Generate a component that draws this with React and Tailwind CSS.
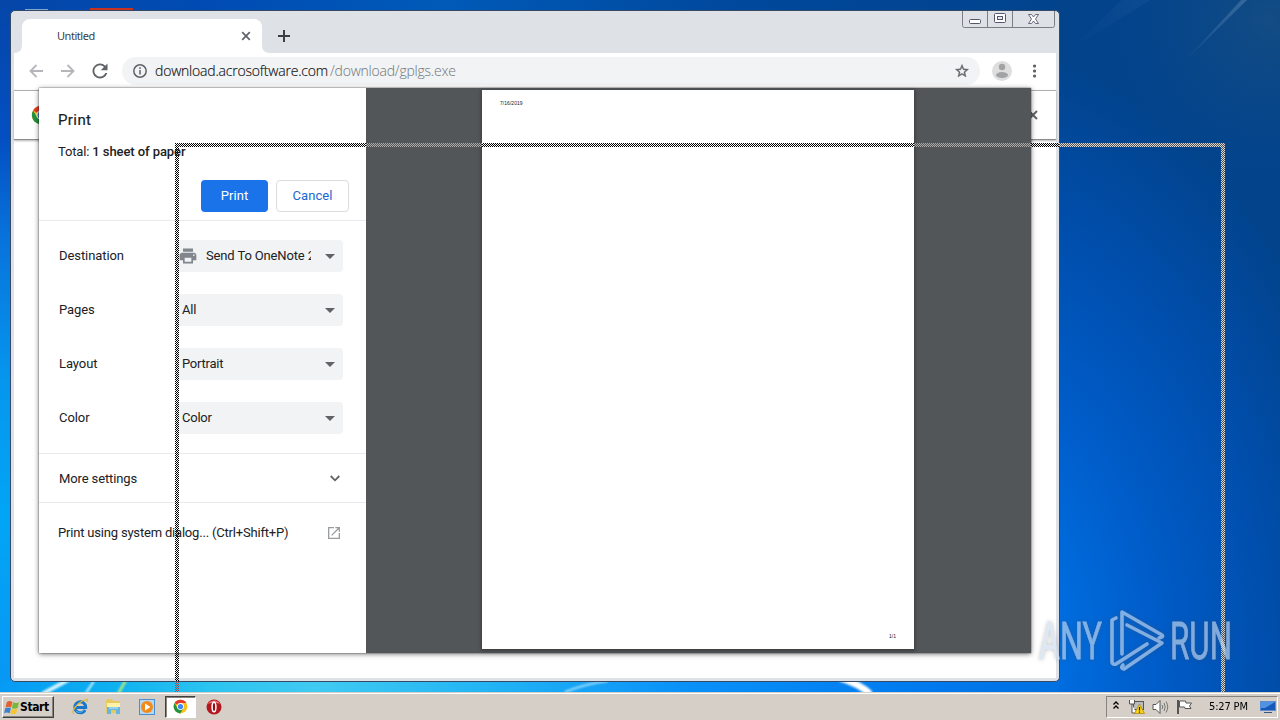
import React from "react";

function Wallpaper() {
  return (
    <svg className="absolute inset-0" width="1280" height="692" viewBox="0 0 1280 692">
      <defs>
        <linearGradient id="top" x1="0" x2="1" y1="0" y2="0">
          <stop offset="0" stopColor="#0546a8" />
          <stop offset=".2" stopColor="#004cb4" />
          <stop offset=".42" stopColor="#005ab8" />
          <stop offset=".7" stopColor="#00489c" />
          <stop offset="1" stopColor="#02438c" />
        </linearGradient>
        <linearGradient id="left" x1="0" x2="0" y1="0" y2="1">
          <stop offset="0" stopColor="#0546a8" />
          <stop offset=".2" stopColor="#034fc2" />
          <stop offset=".34" stopColor="#0872da" />
          <stop offset=".55" stopColor="#0596ee" />
          <stop offset=".75" stopColor="#02a5f5" />
          <stop offset="1" stopColor="#0896f4" />
        </linearGradient>
        <radialGradient id="right" gradientUnits="userSpaceOnUse" cx="0" cy="0" r="1" gradientTransform="translate(960 650) scale(440 640)">
          <stop offset="0" stopColor="#0086ff" />
          <stop offset=".24" stopColor="#006cde" />
          <stop offset=".45" stopColor="#005cc8" />
          <stop offset=".7" stopColor="#004eac" />
          <stop offset=".95" stopColor="#02438c" />
          <stop offset="1" stopColor="#02438c" />
        </radialGradient>
        <radialGradient id="corner" gradientUnits="userSpaceOnUse" cx="1270" cy="20" r="170">
          <stop offset="0" stopColor="#1c5080" stopOpacity=".7" />
          <stop offset="1" stopColor="#0a4886" stopOpacity="0" />
        </radialGradient>
        <linearGradient id="bottom" x1="0" x2="1" y1="0" y2="0">
          <stop offset="0" stopColor="#069af5" />
          <stop offset=".1" stopColor="#0cb0f0" />
          <stop offset=".2" stopColor="#2cc4f0" />
          <stop offset=".3" stopColor="#40caf2" />
          <stop offset=".46" stopColor="#22b4f4" />
          <stop offset=".64" stopColor="#0a92f8" />
          <stop offset=".85" stopColor="#007cf0" />
          <stop offset="1" stopColor="#0070e2" />
        </linearGradient>
        <linearGradient id="ray" x1="0" x2="1" y1="1" y2="0">
          <stop offset="0" stopColor="#fff" stopOpacity="0" />
          <stop offset="1" stopColor="#bde" stopOpacity=".22" />
        </linearGradient>
        <filter id="soft"><feGaussianBlur stdDeviation="1" /></filter>
      </defs>
      <rect width="1280" height="692" fill="url(#right)" />
      <rect x="1050" width="230" height="220" fill="url(#corner)" />
      <rect width="1060" height="12" fill="url(#top)" />
      <rect width="12" height="692" fill="url(#left)" />
      <rect y="681" width="1059" height="11" fill="url(#bottom)" />
      <path d="M1180 66L1250 -3H1244Z" fill="url(#ray)" />
      <path d="M1070 50L1155 -3H1125Z" fill="url(#ray)" opacity=".2" />
      <g filter="url(#soft)" stroke="#d8f6ff" fill="none">
        <path d="M42 694L68 680" strokeWidth="4" />
        <path d="M86 693L94 681" strokeWidth="2" />
        <path d="M118 694L126 680" stroke="#c5ef70" strokeWidth="2.5" />
        <path d="M565 692Q584 684 608 681" strokeWidth="2" opacity=".7" />
        <path d="M840 678Q860 684 870 694" stroke="#fff" strokeWidth="7" />
      </g>
      <rect x="90" y="8" width="43" height="3" fill="#c8321e" />
      <rect x="25" y="9" width="23" height="1" fill="#7fa5d0" />
    </svg>
  );
}

function ChromeIcon({ size }) {
  return (
    <svg width={size} height={size} viewBox="0 0 24 24" className="shrink-0">
      <circle cx="12" cy="12" r="11" fill="#fbc116" />
      <path d="M12 12L2.5 6.5A11 11 0 0 1 21.5 6.5H12Z" fill="#e33b2e" />
      <path d="M2.5 6.5A11 11 0 0 0 11.5 23L16.8 14.8L12 17L7.2 14.8Z" fill="#229342" />
      <circle cx="12" cy="12" r="5.5" fill="#fff" />
      <circle cx="12" cy="12" r="4.2" fill="#4285f4" />
    </svg>
  );
}

function TabStrip() {
  return (
    <div className="flex h-[42px] items-start">
      <div className="relative mt-2 ml-[8px] flex h-[34px] w-[240px] items-center rounded-t-[8px] bg-white pl-[35px] pr-[10px]">
        <svg className="absolute bottom-0 -left-2" width="8" height="8"><path d="M8 0V8H0Q8 8 8 0" fill="#fff" /></svg>
        <svg className="absolute bottom-0 -right-2" width="8" height="8"><path d="M0 0V8H8Q0 8 0 0" fill="#fff" /></svg>
        <span className="font-['Noto_Sans','Open_Sans',sans-serif] text-[11px] tracking-[-0.45px] text-[#3c4043]">Untitled</span>
        <svg className="ml-auto" width="12" height="12" viewBox="0 0 12 12" stroke="#5f6368" strokeWidth="1.7"><path d="M2.2 2.2L9.8 9.8M9.8 2.2L2.2 9.8" /></svg>
      </div>
      <svg className="mt-[19px] ml-[16px]" width="12" height="12" stroke="#3c4043" strokeWidth="2"><path d="M6 0V12M0 6H12" /></svg>
      <svg className="mr-[1px] ml-auto" width="93" height="17" fill="none">
        <path d="M.5 0V14.5Q.5 16.5 2.5 16.5H90.5Q92.5 16.5 92.5 14.5V0M25.5 0V16M50.5 0V16" stroke="#7b7e86" />
        <rect x="7.5" y="8.500" width="11" height="4" rx="1" fill="#fff" stroke="#55586a" />
        <rect x="32.500" y="2.500" width="11" height="9" rx="1" fill="#fff" stroke="#55586a" />
        <rect x="35.500" y="5.500" width="5" height="3" fill="#e8eaef" stroke="#55586a" />
        <path d="M66.500 3.500H69.500L71.500 6L73.500 3.500H76.500L73.500 8L76.500 12.500H73.500L71.500 10L69.500 12.500H66.500L69.500 8Z" fill="#fff" stroke="#66697a" />
      </svg>
    </div>
  );
}

function Toolbar() {
  return (
    <div className="flex h-[37px] items-center bg-white pb-[2px]">
      <svg className="ml-[15px]" width="14" height="14" fill="none" stroke="#b4b6b9" strokeWidth="1.8"><path d="M14 7H1.500M7.500 1L1.500 7L7.500 13" /></svg>
      <svg className="ml-[18px]" width="14" height="14" fill="none" stroke="#b4b6b9" strokeWidth="1.8"><path d="M0 7H12.500M6.500 1L12.500 7L6.500 13" /></svg>
      <svg className="ml-[16px]" width="18" height="18" viewBox="0 0 24 24" fill="#5f6368"><path d="M19.100 4.900A10 10 0 1 0 21.700 14.500H19A7.500 7.500 0 1 1 17.300 6.700L13 11H22V2Z" /></svg>
      <div className="ml-[13px] flex h-[28px] w-[858px] items-center rounded-full bg-[#f1f3f4] pr-[10px] pl-[10px] font-['Open_Sans','Noto_Sans',sans-serif] text-[14px] font-light">
        <svg width="16" height="16" viewBox="0 0 16 16"><circle cx="8" cy="8" r="6.200" fill="none" stroke="#5f6368" strokeWidth="1.500" /><path d="M8 7V11.500M8 4.300V5.900" stroke="#5f6368" strokeWidth="1.500" /></svg>
        <span className="ml-[7px] inline-block w-[175px] whitespace-nowrap tracking-[-0.2px] text-[#101114] [-webkit-text-stroke:0.15px]">download.acrosoftware.com</span>
        <span className="whitespace-nowrap tracking-[-0.22px] text-[#6f7377]">/download/gplgs.exe</span>
        <svg className="ml-auto" width="16" height="16" viewBox="0 0 24 24" fill="#5f6368"><path d="M22 9.240l-7.190-.62L12 2 9.190 8.630 2 9.240l5.460 4.730L5.820 21 12 17.270 18.180 21l-1.630-7.030L22 9.240zM12 15.400l-3.760 2.270 1-4.280-3.320-2.880 4.380-.38L12 6.100l1.710 4.040 4.380.38-3.320 2.880 1 4.280L12 15.400z" stroke="#5f6368" strokeWidth=".5" /></svg>
      </div>
      <svg className="ml-[12px]" width="20" height="20"><circle cx="10" cy="10" r="10" fill="#dedede" /><circle cx="10" cy="6" r="3.200" fill="#a2a3a5" /><ellipse cx="10" cy="14" rx="6" ry="3" fill="#a2a3a5" /></svg>
      <svg className="ml-[20px]" width="4" height="14" fill="#5f6368"><circle cx="2.500" cy="2" r="1.600" /><circle cx="2.500" cy="7" r="1.600" /><circle cx="2.500" cy="12" r="1.600" /></svg>
    </div>
  );
}

function SettingRow({ label, value, printer }) {
  return (
    <div className="flex h-8 items-center">
      <span className="w-[116px] text-[13px] tracking-[-0.08px]">{label}</span>
      <div className="flex h-8 w-[168px] items-center rounded-[4px] bg-[#f1f3f4] pr-2 pl-[7px]">
        {printer && (
          <svg className="-ml-[4px] mr-[8px] shrink-0" width="20" height="20" viewBox="0 0 24 24" fill="#80868b"><path d="M19 8H5c-1.660 0-3 1.340-3 3v6h4v4h12v-4h4v-6c0-1.660-1.340-3-3-3zm-3 11H8v-5h8v5zm3-7c-.55 0-1-.45-1-1s.45-1 1-1 1 .45 1 1-.45 1-1 1zm-1-9H6v4h12V3z" /></svg>
        )}
        <span className={printer ? "w-[105px] shrink-0 overflow-hidden whitespace-nowrap text-[13px] tracking-[-0.14px]" : "text-[13px] tracking-[-0.25px]"}>{value}</span>
        <svg className="ml-auto shrink-0" width="10" height="5"><path d="M0 0H10L5 5Z" fill="#5f6368" /></svg>
      </div>
    </div>
  );
}

function PrintPanel() {
  return (
    <div className="flex w-[327px] flex-col bg-white text-[#202124]">
      <div className="flex h-[133px] flex-col border-b border-[#e8eaed] pl-[19px]">
        <h1 className="mt-[21px] text-[15px] leading-[22px] tracking-[0.4px] [-webkit-text-stroke:0.2px]">Print</h1>
        <p className="mt-[11px] text-[13px] leading-[20px] tracking-[-0.15px] whitespace-nowrap">Total: <b className="font-medium tracking-[-0.08px]">1 sheet of paper</b></p>
        <div className="mt-[18px] flex justify-end gap-2 pr-[17px] text-[13px] tracking-[0.05px]">
          <button className="h-8 w-[67px] rounded-[4px] bg-[#1a73e8] text-white">Print</button>
          <button className="h-8 w-[73px] rounded-[4px] border border-[#dadce0] text-[#1967d2]">Cancel</button>
        </div>
      </div>
      <div className="flex h-[233px] flex-col gap-[22px] border-b border-[#e8eaed] pt-[19px] pl-[20px]">
        <SettingRow label="Destination" value="Send To OneNote 2010" printer />
        <SettingRow label="Pages" value="All" />
        <SettingRow label="Layout" value="Portrait" />
        <SettingRow label="Color" value="Color" />
      </div>
      <div className="flex h-[49px] items-center justify-between border-b border-[#e8eaed] pt-px pr-[26px] pl-[20px] text-[13px] tracking-[-0.12px]">
        More settings
        <svg width="10" height="7" fill="none" stroke="#5f6368" strokeWidth="1.8"><path d="M.7 1L5 5.300L9.300 1" /></svg>
      </div>
      <div className="flex h-[60px] items-center justify-between pr-[24px] pl-[19px] text-[13px]">
        <span className="tracking-[-0.19px]">Print using system dialog... (Ctrl+Shift+P)</span>
        <svg width="16" height="16" viewBox="0 0 24 24" fill="#9a9da0"><path d="M19 19H5V5h7V3H3v18h18v-9h-2v7zM14 3v2h3.590l-9.830 9.830 1.410 1.410L19 6.410V10h2V3h-7z" /></svg>
      </div>
    </div>
  );
}

function PrintDialog() {
  return (
    <div className="absolute top-[77px] left-[28px] flex h-[565px] w-[992px] font-['Roboto',sans-serif] shadow-[0_1px_5px_rgba(0,0,0,0.55),0_0_1px_rgba(0,0,0,0.8)]">
      <PrintPanel />
      <div className="flex flex-1 bg-[#525659] pt-[2px] pl-[116px]">
        <div className="flex h-[559px] w-[432px] flex-col justify-between bg-white pt-[10px] pr-[18px] pb-[9px] pl-[18px] font-['Liberation_Sans',sans-serif] text-[5px] leading-[7px] text-[#222] shadow-[0_1px_3px_1px_#3c3d3e]">
          <span className="tracking-[0.05px]">7/16/2019</span>
          <span className="text-right">1/1</span>
        </div>
      </div>
    </div>
  );
}

function BrowserWindow() {
  return (
    <div className="absolute top-[10px] left-[10px] h-[672px] w-[1050px] rounded-[5px] border border-[#344a66] bg-[#dee1e6] px-[3px] pb-[3px]">
      <TabStrip />
      <Toolbar />
      <div className="relative flex h-[50px] items-center justify-between border-t border-b border-t-[#b0b0b0] border-b-[#8c8c8c] bg-white pr-[18px] pl-[17px] shadow-[0_1px_2px_rgba(0,0,0,.3)]">
        <ChromeIcon size={20} />
        <svg width="10" height="10" stroke="#5f6368" strokeWidth="2"><path d="M1 1L9 9M9 1L1 9" /></svg>
      </div>
      <div className="h-[538px] bg-white" />
      <PrintDialog />
    </div>
  );
}

function Dither({ id, color, base }) {
  return (
    <pattern id={id} width="2" height="2" patternUnits="userSpaceOnUse">
      {base && <rect width="2" height="2" fill={base} />}
      <rect width="1" height="1" fill={color} />
      <rect x="1" y="1" width="1" height="1" fill={color} />
    </pattern>
  );
}

function DragOutline() {
  return (
    <svg className="absolute top-[143px] left-[175px]" width="1050" height="549" shapeRendering="crispEdges">
      <defs>
        <Dither id="onWhite" color="#000" />
        <Dither id="onGray" color="#ada9a6" />
        <Dither id="onBlue" color="#dcd6cc" base="#4a4f58" />
        <Dither id="onCyan" color="#9c4c50" />
      </defs>
      <g fill="url(#onWhite)">
        <rect width="191" height="4" />
        <rect x="307" width="432" height="4" />
        <rect x="856" width="28" height="4" />
        <rect y="4" width="4" height="534" />
      </g>
      <g fill="url(#onGray)">
        <rect x="191" width="116" height="4" />
        <rect x="739" width="117" height="4" />
      </g>
      <g fill="url(#onBlue)">
        <rect x="884" width="166" height="4" />
        <rect x="1046" y="4" width="4" height="545" />
      </g>
      <rect y="538" width="4" height="11" fill="url(#onCyan)" />
    </svg>
  );
}

function Watermark() {
  return (
    <svg className="absolute top-[600px] left-[1030px] drop-shadow-[0_0_2px_rgba(80,80,80,0.55)]" width="250" height="80" fill="#ccdcee" opacity=".64">
      <g fontFamily="'Liberation Sans Narrow','Roboto',sans-serif" fontSize="51" stroke="#ccdcee" strokeWidth=".8">
        <text x="9" y="59" textLength="63" lengthAdjust="spacingAndGlyphs">ANY</text>
        <text x="140" y="59" textLength="62" lengthAdjust="spacingAndGlyphs">RUN</text>
      </g>
      <g fill="none" stroke="#ccdcee" strokeWidth="3.6" strokeLinecap="round" strokeLinejoin="round">
        <path d="M86 18L82 20V62Q82 65 86 64L117 44" />
        <path d="M92 54V12L132 35Q134 37 129 38" />
        <path d="M97 25L132 43L94 69Q90 68 93 65" />
      </g>
    </svg>
  );
}

function Taskbar() {
  return (
    <div className="relative flex h-7 items-center border-t border-[#d4d0c8] bg-[#d5cfc7] shadow-[inset_0_1px_0_#fff]">
      <button className="mt-px ml-[2px] flex h-[22px] w-[52px] items-center border border-t-white border-r-[#404040] border-b-[#404040] border-l-white bg-[#d5cfc7] pl-[1px] font-['DejaVu_Sans_Condensed','DejaVu_Sans',sans-serif] text-[12px] font-bold tracking-[-0.4px] text-black shadow-[inset_-1px_-1px_0_#87837d]">
        <svg width="16" height="15" viewBox="0 0 17 16" className="shrink-0">
          <path d="M3 2Q6 0 9 2L7.500 8Q4.500 6.500 1.500 8Z" fill="#e5602c" /><path d="M9.800 2.500Q13 4 16 2.500L14.500 8.500Q11.500 10 8.300 8.400Z" fill="#79b83b" />
          <path d="M1.300 8.800Q4.300 7.300 7.300 8.800L6 14Q3 12.500 0 14Z" fill="#3d82cc" /><path d="M8 9.300Q11 11 14.200 9.400L12.800 14.500Q10 16 6.700 14.400Z" fill="#f6c52e" />
        </svg>
        Start
      </button>
      <div className="ml-[17px] flex h-[22px] items-center">
        <svg width="18" height="18" viewBox="0 0 18 18" fill="none"><path d="M14 12A5.500 5.500 0 1 1 14.700 9.500H5" stroke="#1976c8" strokeWidth="3" /><path d="M13 11.500A5 5 0 0 1 5 13" stroke="#5cb8ee" /><path d="M3 16C-1 14 7 4 14 2Q18 0 16 4" stroke="#e2b92f" strokeWidth="1.300" /></svg>
        <svg className="ml-[16px]" width="17" height="17" viewBox="0 0 17 17"><path d="M1 3L2 1H7L8 3H15V15H1Z" fill="#e7c95f" /><path d="M2 5H15V9H2Z" fill="#fff1a8" /><path d="M2 9H15V16H11V12H6V16H2Z" fill="#66b5dc" /><path d="M4 10H13" stroke="#c2edff" /></svg>
        <svg className="ml-[17px]" width="16" height="16" viewBox="0 0 16 16"><rect x=".5" y=".5" width="15" height="15" fill="#b5d7f0" stroke="#4b8fd0" /><circle cx="8" cy="8" r="6" fill="#f28a1a" /><path d="M6 4.500L11.500 8L6 11.500Z" fill="#fff" /></svg>
      </div>
      <div className="ml-[10px] flex h-[22px] w-[31px] items-center justify-center border border-t-[#404040] border-r-white border-b-white border-l-[#404040] bg-white shadow-[inset_1px_1px_0_#87837d]"><ChromeIcon size={15} /></div>
      <svg className="ml-[10px]" width="16" height="16" viewBox="0 0 16 16"><circle cx="8" cy="8" r="7.500" fill="#b31720" /><path d="M2 5A7 7 0 0 1 14 5Q8 2 2 5" fill="#e77" /><ellipse cx="8" cy="8" rx="1.900" ry="4.800" fill="#8e0f16" stroke="#fff" strokeWidth="1.500" /></svg>
      <div className="mt-px mr-[2px] ml-auto flex h-[22px] w-[172px] items-center border border-t-[#87837d] border-r-white border-b-white border-l-[#87837d] pl-[6px]">
        <svg width="6" height="9" className="-mt-[3px]" fill="none" stroke="#000" strokeWidth="1.300"><path d="M.5 3.500L3 1L5.500 3.500M.5 7.500L3 5L5.500 7.500" /></svg>
        <svg className="ml-[9px]" width="17" height="16" viewBox="0 0 17 16"><rect x="5.500" y="2.500" width="10" height="8" fill="#b9bdc0" stroke="#555" /><path d="M1.500 1V5H6.500V1M4 5V14H8" fill="#fff" stroke="#555" /><path d="M11.500 5L16.500 14.500H6.500Z" fill="#f9d21a" stroke="#a98300" strokeWidth=".7" /><path d="M11.500 8V11.500M11.500 12.500V13.700" stroke="#222" strokeWidth="1.200" /></svg>
        <svg className="ml-[7px]" width="17" height="16" viewBox="0 0 17 16" fill="none" stroke="#777"><path d="M1 5.500H4L8 1.500V14.500L4 10.500H1Z" fill="#fff" stroke="#555" /><path d="M10 6Q11.500 8 10 10M12 4Q14.500 8 12 12M14 2.500Q17.500 8 14 13.500" /></svg>
        <svg className="ml-[7px]" width="17" height="16" viewBox="0 0 17 16"><path d="M2 1V15" stroke="#555" strokeWidth="2" /><path d="M3.500 2H9.500L10 4H15.500L13.500 7L15 9.500H9L8.500 8H3.500Z" fill="#fff" stroke="#555" /></svg>
        <span className="ml-[16px] w-[41px] font-['DejaVu_Sans_Condensed','DejaVu_Sans',sans-serif] text-[11px] tracking-[-0.15px] whitespace-nowrap text-black">5:27 PM</span>
        <svg className="ml-[10px]" width="16" height="14" viewBox="0 0 16 14"><rect x=".5" y="1.500" width="15" height="9" fill="#1858b8" stroke="#5b8dd0" /><path d="M1 2H15L5 8H1Z" fill="#4f94e2" /><path d="M4 12.500H12" stroke="#365780" /></svg>
      </div>
    </div>
  );
}

export default function App() {
  return (
    <div className="relative flex h-[720px] w-[1280px] flex-col overflow-hidden bg-[#0050b0]">
      <div className="relative h-[692px] shrink-0">
        <Wallpaper />
        <BrowserWindow />
        <DragOutline />
        <Watermark />
      </div>
      <Taskbar />
    </div>
  );
}
